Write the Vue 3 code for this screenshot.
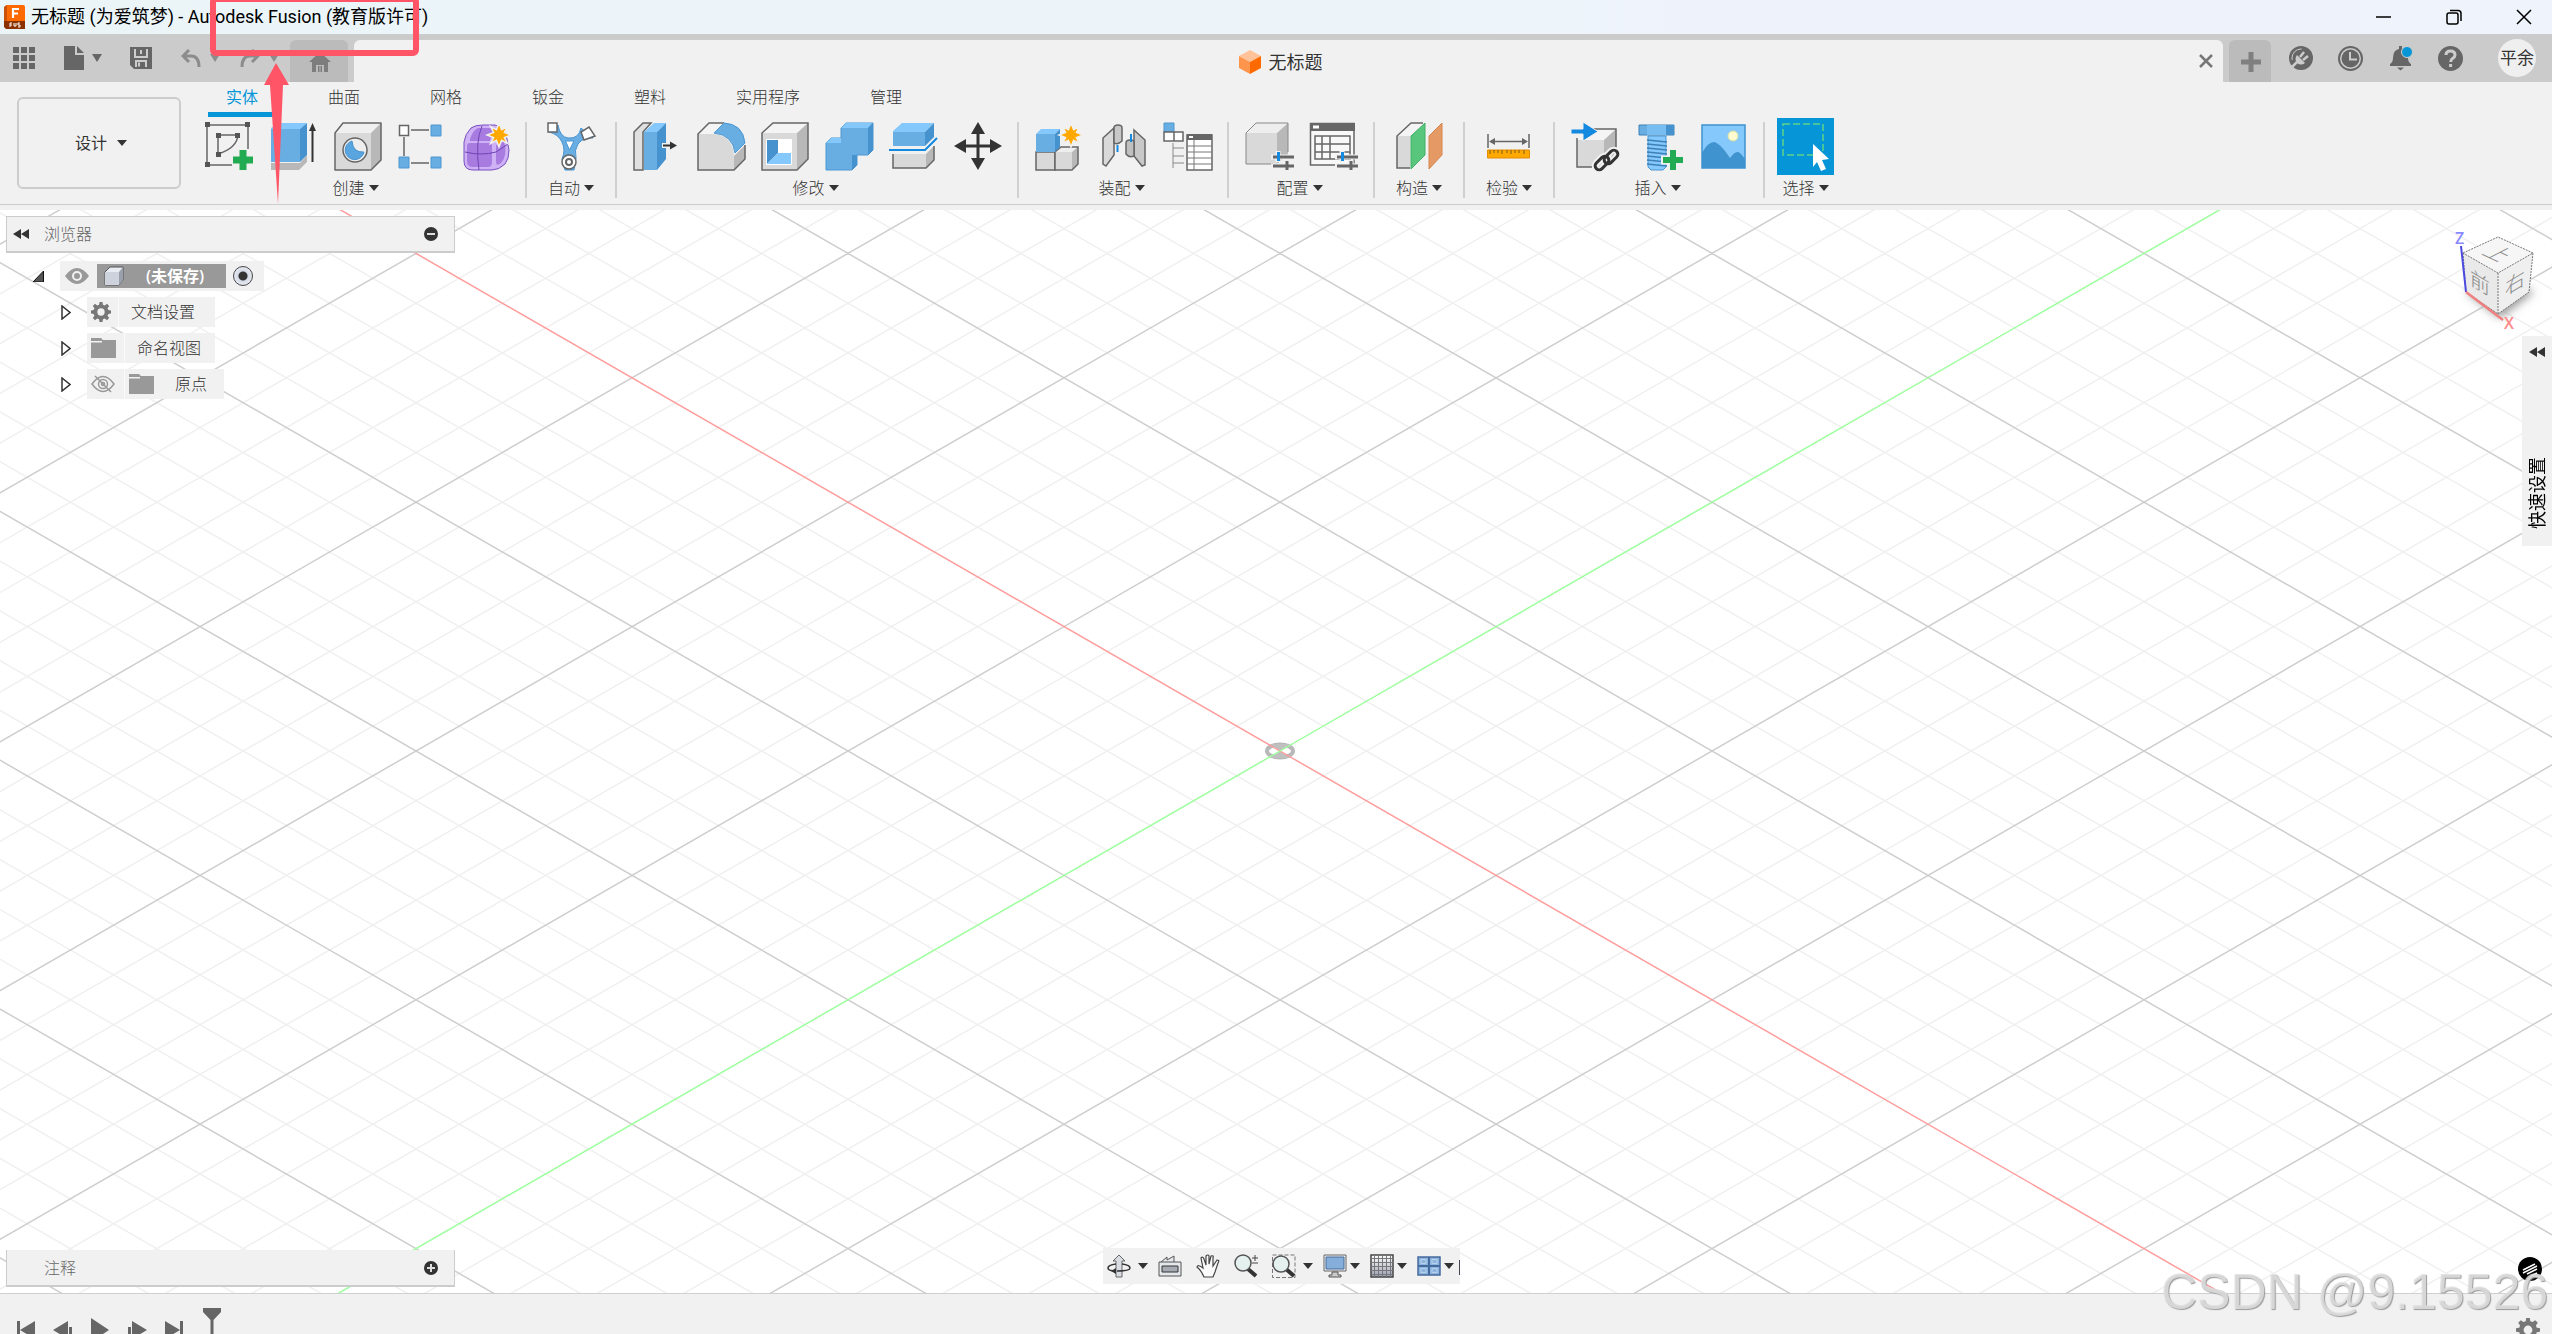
<script setup>
import { ref } from 'vue'

const tabs = ['实体', '曲面', '网格', '钣金', '塑料', '实用程序', '管理']
const activeTab = ref('实体')
const rootActive = ref('root')

// Ground grid: every fifth line is a major one. Lines follow y = ±slope · x + offset.
const slope = 124.4 / 216
const halfWidth = 1400
const step = (124.4 * 2) / 5
const line = (dir, n) => {
  const c = n * step
  const rise = dir * slope * halfWidth
  return `M${-halfWidth} ${(c - rise).toFixed(2)}L${halfWidth} ${(c + rise).toFixed(2)}`
}
const minor = []
const major = []
for (let n = -28; n <= 28; n++) {
  if (n === 0) continue
  const target = n % 5 === 0 ? major : minor
  target.push(line(1, n), line(-1, n))
}
const minorPath = minor.join('')
const majorPath = major.join('')

const star =
  'M0-12 2.6-5.4 8.5-8.5 5.4-2.6 12 0 5.4 2.6 8.5 8.5 2.6 5.4 0 12-2.6 5.4-8.5 8.5-5.4 2.6-12 0-5.4-2.6-8.5-8.5-2.6-5.4Z'
const gear =
  'M10.2 0h3.6l.5 3.2 2.2.9 2.7-1.9 2.6 2.6-1.9 2.7.9 2.2 3.2.5v3.6l-3.2.5-.9 2.2 1.9 2.7-2.6 2.6-2.7-1.9-2.2.9-.5 3.2h-3.6l-.5-3.2-2.2-.9-2.7 1.9-2.6-2.6 1.9-2.7-.9-2.2L0 13.8v-3.6l3.2-.5.9-2.2-1.9-2.7 2.6-2.6 2.7 1.9 2.2-.9ZM12 7.600a4.400 4.400 0 1 0 0 8.800a4.400 4.400 0 1 0 0-8.800Z'
</script>

<template>
  <div class="app">
    <header class="titlebar">
      <svg class="logo" viewBox="0 0 22 24" aria-hidden="true">
        <path d="M2 1 4 0H20a2 2 0 0 1 2 2V16H1V3Z" fill="#ff6a00" />
        <path d="M1 2 4 0V16H1Z" fill="#c9510a" />
        <path d="M1 16H22V24H3L1 22Z" fill="#8c3200" />
        <path d="M10 13V4h6M10 8.500h5" fill="none" stroke="#fff" stroke-width="2.200" />
        <path d="M7 22v-4h2M7 20h2M11 18v3h2v-3M17 18h-2v2h2v2h-2" fill="none" stroke="#fff" stroke-width="1" />
      </svg>
      <h1>无标题 (为爱筑梦) - Autodesk Fusion (教育版许可)</h1>
      <div class="window-buttons">
        <button aria-label="最小化"><svg viewBox="0 0 16 16" stroke-width="1.500"><path d="M0 8H15" /></svg></button>
        <button aria-label="还原">
          <svg viewBox="0 0 16 16" stroke-width="1.500"><rect x="1" y="4" width="11" height="11" rx="2" /><path d="M4 1.500h8a3 3 0 0 1 3 3V12" /></svg>
        </button>
        <button aria-label="关闭"><svg viewBox="0 0 16 16" stroke-width="1.500"><path d="M1 1 15 15M15 1 1 15" /></svg></button>
      </div>
    </header>

    <div class="tabbar">
      <div class="quick">
        <button aria-label="数据面板">
          <svg width="22" height="22" viewBox="0 0 22 22" fill="#666"><path d="M0 0h6v6H0zM8 0h6v6H8zM16 0h6v6h-6zM0 8h6v6H0zM8 8h6v6H8zM16 8h6v6h-6zM0 16h6v6H0zM8 16h6v6H8zM16 16h6v6h-6z" /></svg>
        </button>
        <button class="file" aria-label="文件">
          <svg width="20" height="24" viewBox="0 0 20 24" fill="#666"><path d="M0 0H11V9H20V24H0ZM13 0 20 7H13Z" /></svg>
          <i class="caret"></i>
        </button>
        <button class="save" aria-label="保存">
          <svg width="22" height="22" viewBox="0 0 22 22"><path d="M0 0H22V22H4L0 18Z" fill="#666" /><path d="M5 2v8h12V2M6 20v-6h10v6M11 3v4M9 15.500v4" fill="none" stroke="#ccc" stroke-width="2" /></svg>
        </button>
        <button class="undo" aria-label="撤消">
          <svg width="20" height="18" viewBox="0 0 20 18" fill="none" stroke="#8c8c8c" stroke-width="3"><path d="M8 1 2 7l6 6M2 7h8q8 0 8 11" /></svg>
          <i class="caret dim"></i>
        </button>
        <button class="undo" aria-label="恢复">
          <svg width="20" height="18" viewBox="0 0 20 18" fill="none" stroke="#8c8c8c" stroke-width="3"><path d="M12 1l6 6-6 6M18 7h-8Q2 7 2 18" /></svg>
          <i class="caret dim"></i>
        </button>
      </div>
      <button class="home" aria-label="主页">
        <svg width="22" height="20" viewBox="0 0 22 20" fill="#7d7d7d"><path d="M11 0 22 10H0ZM3 10H19V20H15V13H7V20H3ZM9 14h1.500v6H9zM11.500 14H13v6h-1.500z" /></svg>
      </button>
      <div class="doc-tab">
        <div class="doc-name">
          <svg width="22" height="24" viewBox="0 0 22 24"><path d="M11 0 22 6 11 12 0 6Z" fill="#ffc299" /><path d="M0 6 11 12V24L0 18Z" fill="#ff944d" /><path d="M22 6 11 12V24L22 18Z" fill="#ff6a00" /></svg>
          <span>无标题</span>
        </div>
        <button aria-label="关闭文档"><svg width="14" height="14" viewBox="0 0 14 14" stroke="#777" stroke-width="2.500"><path d="M1 1 13 13M13 1 1 13" /></svg></button>
      </div>
      <button class="new-tab" aria-label="新建">
        <svg width="20" height="20" viewBox="0 0 20 20" stroke="#808080" stroke-width="5"><path d="M10 0V20M0 10H20" /></svg>
      </button>
      <div class="status">
        <button aria-label="扩展">
          <svg width="24" height="24" viewBox="0 0 24 24"><circle cx="12" cy="12" r="12" fill="#666" /><circle cx="12" cy="12" r="9" fill="none" stroke="#ccc" stroke-width="1" stroke-dasharray="17 40" stroke-dashoffset="-26" /><path d="M2 22 8 16" stroke="#ccc" stroke-width="2.500" /><path d="M8 9 16 17q-4 3-8 0-3-4 0-8Z" fill="#ccc" /><path d="M11 11l4-5M14 14l5-4" fill="none" stroke="#ccc" stroke-width="2.500" /></svg>
        </button>
        <button aria-label="作业状态">
          <svg width="25" height="25" viewBox="0 0 25 25"><circle cx="12.500" cy="12.500" r="11.500" fill="none" stroke="#666" stroke-width="2" /><circle cx="12.500" cy="12.500" r="9" fill="#666" /><path d="M12 6v7.500h7" fill="none" stroke="#ccc" stroke-width="2" /></svg>
        </button>
        <button aria-label="通知">
          <svg width="25" height="25" viewBox="0 0 25 25"><path d="M11 0h3v3q6 1 6 9 0 4 3 6v2H2v-2q3-2 3-6 0-8 6-9ZM9 21.500h7l-3.500 3Z" fill="#666" /><circle cx="19" cy="6" r="5.500" fill="#0696d7" stroke="#ccc" /></svg>
        </button>
        <button aria-label="帮助">
          <svg width="25" height="25" viewBox="0 0 25 25"><circle cx="12.500" cy="12.500" r="12.500" fill="#666" /><path d="M8 9q0-4 4.500-4t4.500 4q0 2-2.500 3.500-1.800 1.200-1.800 3.500M12.600 18v3" fill="none" stroke="#ccc" stroke-width="3" /></svg>
        </button>
        <button class="avatar">平余</button>
      </div>
    </div>

    <div class="ribbon">
      <button class="workspace">设计 <i class="caret small"></i></button>
      <div class="ribbon-main">
        <nav class="ribbon-tabs">
          <button v-for="t in tabs" :key="t" :class="{ active: t === activeTab }" @click="activeTab = t">{{ t }}</button>
        </nav>
        <div class="groups">
          <section class="group">
            <div class="tools">
              <button aria-label="创建草图">
                <svg viewBox="0 0 48 48"><path d="M43 27V3H2V43H27M13 32V13H33Q32 26 13 32" fill="none" stroke="#666" stroke-width="1.500" /><path d="M0 0h5v5H0zM40 0h5v5h-5zM0 40h5v5H0zM11 11h5v5h-5zM30 11h5v5h-5zM11 30h5v5h-5z" fill="#555" /><path d="M38 27V49M27 38H49" stroke="#f0f0f0" stroke-width="10" /><path d="M38 28V48M28 38H48" stroke="#22ab52" stroke-width="7" /></svg>
              </button>
              <button aria-label="拉伸">
                <svg viewBox="0 0 48 48"><path d="M2 41H31L38 33V40L30 48H2Z" fill="#b8b8b8" /><path d="M2 6 10 1H38L31 7H2Z" fill="#85c8fb" /><path d="M2 7H31V40H2Z" fill="#68aee3" /><path d="M31 7 38 1V33L31 40Z" fill="#4692cf" /><path d="M43.500 8V40" stroke="#333" stroke-width="2" /><path d="M43.500 1 47 9H40Z" fill="#333" /></svg>
              </button>
              <button aria-label="孔">
                <svg viewBox="0 0 48 48" stroke-linejoin="round"><path d="M2 11 10 1H48V38L38 48H2Z" fill="#f0f0f0" /><path d="M2 11H38V48H2Z" fill="#d9d9d9" /><path d="M38 11 48 1V38L38 48Z" fill="#b8b8b8" /><path d="M2 11 10 1H48V38L38 48H2Z" fill="none" stroke="#666" stroke-width="1.500" /><circle cx="22" cy="28" r="12" fill="#eee" stroke="#666" stroke-width="1.500" /><path d="M19 19A9.500 9.500 0 1 0 31 30Q20 31 19 19Z" fill="#58a5e0" stroke="#4692cf" /></svg>
              </button>
              <button aria-label="阵列">
                <svg viewBox="0 0 48 48"><path d="M14 8H32M7 15V34M14 41H32" stroke="#666" stroke-width="1.500" /><path d="M2.500 3.500h9v10h-9z" fill="#fff" stroke="#666" stroke-width="1.500" /><path d="M34 3h10v11H34zM2 35h10v11H2zM34 35h10v11H34z" fill="#68aee3" stroke="#4d97d2" /></svg>
              </button>
              <button aria-label="创建形状">
                <svg viewBox="0 0 48 48"><path d="M3 20Q4 12 10 6 14 3 22 3H34Q44 6 46 17L48 28Q48 37 44 42 38 48 31 48H12Q3 48 3 39Z" fill="#ceb2f5" stroke="#7a4fc0" /><path d="M9 17Q12 8 17 6H33Q30 12 29 19H9ZM6 24Q6 21 9 21H28Q31 21 31 24V40Q31 45 27 45H12Q6 45 6 39ZM35 23 43 19Q47 33 40 41 35 45 35 40Z" fill="#a77be0" /><path d="M4 30Q20 34 35 30L47 22M21 4Q14 20 18 48" stroke="#7044b5" fill="none" /><path :d="star" transform="translate(38 13)" fill="#ffa800" stroke="#f0f0f0" stroke-width="1.500" /></svg>
              </button>
            </div>
            <button class="group-label">创建<i class="caret small"></i></button>
          </section>
          <section class="group single">
            <div class="tools">
              <button aria-label="自动建模">
                <svg viewBox="0 0 48 48"><path d="M2 10 11 3Q13 15 21 16 32 17 34 6L46 16Q36 15 31 22 27 28 29 36L27 48H18L15 37Q19 28 15 20 11 12 2 10Z" fill="#68aee3" stroke="#4692cf" /><path d="M18.500 19H27L22.500 28Z" fill="#fff" stroke="#4692cf" /><path d="M1 1H10V10H1Z" fill="#fff" stroke="#666" stroke-width="1.500" /><path d="M42 5 48 14 37 18 34 10Z" fill="#fff" stroke="#666" stroke-width="1.500" /><circle cx="22" cy="40" r="7" fill="#fff" stroke="#666" stroke-width="1.500" /><circle cx="22" cy="40" r="3" fill="none" stroke="#666" stroke-width="2" /></svg>
              </button>
            </div>
            <button class="group-label">自动<i class="caret small"></i></button>
          </section>
          <section class="group">
            <div class="tools">
              <button aria-label="按拉">
                <svg viewBox="0 0 48 48"><path d="M10 48H1V10L10 1H18L10 10Z" fill="#e0e0e0" stroke="#666" stroke-width="1.500" /><path d="M11 10 21 1H33L24 10Z" fill="#85c8fb" /><path d="M11 10H24V48H11Z" fill="#68aee3" /><path d="M24 10 33 1V37L24 48Z" fill="#4692cf" /><path d="M29 23.500H46" stroke="#f0f0f0" stroke-width="5" /><path d="M30 23.500H38" stroke="#333" stroke-width="2" /><path d="M37 19.500 44 23.500 37 27.500Z" fill="#333" /></svg>
              </button>
              <button aria-label="圆角">
                <svg viewBox="0 0 48 48"><path d="M1 12 12 1H27L17 12Z" fill="#f4f4f4" /><path d="M1 12H17Q36 14 37 34V48H1Z" fill="#d9d9d9" /><path d="M37 34 48 23V37L37 48Z" fill="#b8b8b8" /><path d="M27 1H12L1 12V48H37L48 37V23" fill="none" stroke="#666" stroke-width="1.500" /><path d="M17 11 27 1Q46 2 48 21L38 31Q36 13 17 11Z" fill="#68aee3" stroke="#4d97d2" /></svg>
              </button>
              <button aria-label="抽壳">
                <svg viewBox="0 0 48 48"><path d="M1 11 12 1H47V37L36 48H1Z" fill="#f4f4f4" /><path d="M1 11H36V48H1Z" fill="#d9d9d9" /><path d="M36 11 47 1V37L36 48Z" fill="#b8b8b8" /><path d="M1 11 12 1H47V37L36 48H1Z" fill="none" stroke="#666" stroke-width="1.500" /><path d="M5 17H31V43H5Z" fill="#fff" /><path d="M6 18H17V31L6 42Z" fill="#4692cf" /><path d="M6 42 17 31H30V42Z" fill="#85c8fb" /></svg>
              </button>
              <button aria-label="合并">
                <svg viewBox="0 0 48 48"><path d="M1 21 6 16H16V6L21 1H48V28L43 33H32V43L27 48H1Z" fill="#68aee3" stroke="#4d97d2" /><path d="M16 6 21 1H47L43 6ZM1 21 6 16H16V21Z" fill="#85c8fb" /><path d="M43 6 48 1V28L43 33ZM27 33H32V43L27 48Z" fill="#4692cf" /></svg>
              </button>
              <button aria-label="分割实体">
                <svg viewBox="0 0 48 48"><path d="M4 9 13 1H45L36 10H4Z" fill="#85c8fb" /><path d="M4 10H36V24H4Z" fill="#68aee3" /><path d="M36 10 45 1V15L36 24Z" fill="#4692cf" /><path d="M0 28H36L48 16" fill="none" stroke="#1389e0" stroke-width="2" /><path d="M4 32H37V46H4Z" fill="#d9d9d9" /><path d="M37 32 45 24V38L37 46Z" fill="#b8b8b8" /><path d="M4 32V46H37L45 38V24" fill="none" stroke="#666" stroke-width="1.500" /></svg>
              </button>
              <button aria-label="移动/复制">
                <svg viewBox="0 0 48 48"><path d="M25 8V40M9 24H41" stroke="#333" stroke-width="3" /><path d="M25 0 32 12H18ZM25 48 32 36H18ZM1 24 13 17V31ZM49 24 37 17V31Z" fill="#333" /></svg>
              </button>
            </div>
            <button class="group-label">修改<i class="caret small"></i></button>
          </section>
          <section class="group">
            <div class="tools">
              <button aria-label="新建零部件">
                <svg viewBox="0 0 48 48"><path d="M1 30H20V48H1Z" fill="#d9d9d9" stroke="#666" stroke-width="1.500" /><path d="M20 30 26 25H43L37 30Z" fill="#eee" /><path d="M20 30H37V48H20Z" fill="#d9d9d9" /><path d="M37 30 43 25V42L37 48Z" fill="#b8b8b8" /><path d="M20 48V30L26 25H43V42L37 48Z" fill="none" stroke="#666" stroke-width="1.500" /><path d="M1 12 6 7H25L20 12Z" fill="#85c8fb" /><path d="M1 12H20V30H1Z" fill="#68aee3" /><path d="M20 12 25 7V25L20 30Z" fill="#4692cf" /><path :d="star" transform="translate(36 13)" fill="#ffa800" stroke="#f0f0f0" stroke-width="1.500" /></svg>
              </button>
              <button aria-label="联接">
                <svg viewBox="0 0 48 48" stroke="#666" stroke-width="1.500"><path d="M4 16 15 6V33L7 44 4 42Z" fill="#d9d9d9" /><path d="M15 6Q15 3 19 3T23 6V19Q19 23 15 21Z" fill="#c8c8c8" /><path d="M35 8 46 18V43L43 44 35 34Z" fill="#c8c8c8" /><path d="M27 21Q27 18 31 18T35 20V34Q30 36 27 32Z" fill="#c0c0c0" /><path d="M18.500 23V30M32 12V20" stroke="#1389e0" stroke-width="2" /></svg>
              </button>
              <button aria-label="明细表">
                <svg viewBox="0 0 48 48"><path d="M1 1H11V10H1Z" fill="#68aee3" stroke="#4d97d2" /><path d="M1 10H11V19H1ZM11 10H20V19H11Z" fill="#fff" stroke="#666" stroke-width="1.500" /><path d="M10 21V46M10 26H21M10 34H21M10 41H21" stroke="#888" stroke-width="1" /><path d="M24 13H49V48H24Z" fill="#fff" stroke="#666" stroke-width="1.500" /><path d="M24 12H49V18H24Z" fill="#666" /><path d="M31 18V48M24 24H49M24 30H49M24 36H49M24 42H49" stroke="#777" /><path d="M26 14h4v2h-4z" fill="#fff" /></svg>
              </button>
            </div>
            <button class="group-label">装配<i class="caret small"></i></button>
          </section>
          <section class="group">
            <div class="tools">
              <button aria-label="配置设计">
                <svg viewBox="0 0 48 48"><path d="M1 11 11 1H43L32 11Z" fill="#eee" /><path d="M1 11H32V42H1Z" fill="#d9d9d9" /><path d="M32 11 43 1V32L32 42Z" fill="#b8b8b8" /><path d="M28 42H1V11L11 1H43V30" fill="none" stroke="#888" /><path d="M26 35H48M26 44H48M33 29V40M42 38V49" stroke="#f0f0f0" stroke-width="5" /><path d="M28 35H49M28 44H49M42 39V48" stroke="#666" stroke-width="3" /><path d="M33.500 30V39" stroke="#1389e0" stroke-width="3" /></svg>
              </button>
              <button aria-label="配置表">
                <svg viewBox="0 0 48 48"><path d="M1.500 1.500H45V43H1.500Z" fill="#f8f8f8" stroke="#666" stroke-width="1.500" /><path d="M1 1H46V9H1Z" fill="#666" /><path d="M4 3.500h6v3H4z" fill="#fff" /><path d="M6 14H41V37H6ZM6 22H41M6 30H41M13 14V37M21 14V37" fill="none" stroke="#666" stroke-width="1.500" /><path d="M26 35H48M26 44H48M33 29V40M42 38V49" stroke="#f0f0f0" stroke-width="5" /><path d="M28 35H49M28 44H49M42 39V48" stroke="#666" stroke-width="3" /><path d="M33.500 30V39" stroke="#1389e0" stroke-width="3" /></svg>
              </button>
            </div>
            <button class="group-label">配置<i class="caret small"></i></button>
          </section>
          <section class="group single">
            <div class="tools">
              <button aria-label="偏移平面">
                <svg viewBox="0 0 48 48"><path d="M2 14 16 1H29L15 14Z" fill="#f4f4f4" /><path d="M2 14H15V46H2Z" fill="#d9d9d9" /><path d="M15 46H2V14L16 1H28" fill="none" stroke="#666" stroke-width="1.500" /><path d="M16 14 30 1V33L16 47Z" fill="#59c67d" stroke="#41b068" /><path d="M34 14 47 1V33L34 47Z" fill="#e59a66" stroke="#d6874f" /></svg>
              </button>
            </div>
            <button class="group-label">构造<i class="caret small"></i></button>
          </section>
          <section class="group single">
            <div class="tools">
              <button aria-label="测量">
                <svg viewBox="0 0 48 48"><path d="M3 12V26M44 12V26M6 19.500H41" stroke="#666" stroke-width="1.500" /><path d="M4 19.500 10 16V23ZM43 19.500 37 16V23Z" fill="#666" /><path d="M2.500 28H44.500V36H2.500Z" fill="#ffa800" stroke="#e08d00" /><path d="M5 28v4M9 28v3M13 28v3M17 28v4M22 28v3M26 28v4M30 28v3M34 28v3M39 28v4" stroke="#7a5a20" /></svg>
              </button>
            </div>
            <button class="group-label">检验<i class="caret small"></i></button>
          </section>
          <section class="group">
            <div class="tools">
              <button aria-label="插入衍生">
                <svg viewBox="0 0 48 48"><path d="M6 18 17 7H45L33 18Z" fill="#f4f4f4" /><path d="M6 18H33V45H6Z" fill="#d9d9d9" /><path d="M33 18 45 7V34L33 45Z" fill="#b8b8b8" /><path d="M6 16V45H30M20 7H45V30" fill="none" stroke="#666" stroke-width="1.500" /><path d="M0 7H12V0L27 9.500 12 19V12H0Z" fill="#1389e0" stroke="#f0f0f0" /><g fill="none" stroke="#f0f0f0" stroke-width="7"><rect x="-8" y="-4" width="16" height="8" rx="4" transform="translate(31 41) rotate(-45)" /><rect x="-8" y="-4" width="16" height="8" rx="4" transform="translate(40 35) rotate(-45)" /></g><g fill="none" stroke="#333" stroke-width="3"><rect x="-8" y="-4" width="16" height="8" rx="4" transform="translate(31 41) rotate(-45)" /><rect x="-8" y="-4" width="16" height="8" rx="4" transform="translate(40 35) rotate(-45)" /></g></svg>
              </button>
              <button aria-label="插入紧固件">
                <svg viewBox="0 0 48 48"><path d="M13 14H31V45L28 48H16L13 45Z" fill="#85c8fb" stroke="#4d97d2" /><path d="M4 3H39V13H4Z" fill="#68aee3" stroke="#3c81b8" /><path d="M12 3H31V13H12Z" fill="#78bdf2" /><path d="M31 3H39V13H31Z" fill="#4692cf" /><path d="M12 18 32 20M12 22 32 24M12 26 32 28M12 30 32 32M12 34 32 36M12 38 32 40M12 42 32 44" stroke="#3c81b8" stroke-width="1.500" /><path d="M38 26V49M26 38H49" stroke="#f0f0f0" stroke-width="9" /><path d="M38 28V48M28 38H48" stroke="#22ab52" stroke-width="6" /></svg>
              </button>
              <button aria-label="画布">
                <svg viewBox="0 0 48 48"><path d="M3 3H46V46H3Z" fill="#85c8fb" /><path d="M3 31Q9 20 15 20 21 21 31 36 36 29 39 30 41 30 46 37V46H3Z" fill="#3f93cf" /><path d="M3 3H46V46H3Z" fill="none" stroke="#3f93cf" stroke-width="1.500" /><circle cx="34" cy="14" r="5" fill="#fffbd0" stroke="#d5e2a0" /></svg>
              </button>
            </div>
            <button class="group-label">插入<i class="caret small"></i></button>
          </section>
          <section class="group select-group">
            <div class="tools">
              <button aria-label="选择">
                <svg viewBox="0 0 57 57"><path d="M0 0H57V57H0Z" fill="#0696d7" /><path d="M6 6H46V37H6Z" fill="none" stroke="#5fd38a" stroke-width="1.500" stroke-dasharray="7 3" /><path d="M36 26 52 41 45 42 49 51 44 53 40 44 36 49Z" fill="#fff" /></svg>
              </button>
            </div>
            <button class="group-label">选择<i class="caret small"></i></button>
          </section>
        </div>
      </div>
    </div>

    <main class="viewport">
      <svg class="grid" viewBox="-1280 -541 2552 1083" preserveAspectRatio="xMidYMid slice" aria-hidden="true">
        <path :d="minorPath" stroke="#f0f0f0" stroke-width="1.500" />
        <path :d="majorPath" stroke="#cecece" stroke-width="1.500" />
        <ellipse rx="13" ry="6.500" fill="none" stroke="#b8b8b8" stroke-width="4" />
        <path d="M-10-7H10L0 0 10 7H-10L0 0Z" fill="#c0c0c0" />
        <path :d="line(1, 0)" stroke="#ff9d9d" stroke-width="1.500" />
        <path :d="line(-1, 0)" stroke="#9dff9d" stroke-width="1.500" />
      </svg>

      <aside class="browser">
        <div class="panel">
          <button aria-label="折叠"><svg width="16" height="10" viewBox="0 0 16 10" fill="#333"><path d="M0 5 8 0V10ZM8 5 16 0V10Z" /></svg></button>
          <h2>浏览器</h2>
          <button aria-label="收起"><svg width="14" height="14" viewBox="0 0 14 14"><circle cx="7" cy="7" r="7" fill="#333" /><path d="M3 7H11" stroke="#ddd" stroke-width="2" /></svg></button>
        </div>
        <ul class="tree">
          <li class="root">
            <svg class="twist" width="11" height="11" viewBox="0 0 11 11"><path d="M0 11 10.500 0V11Z" fill="#555" stroke="#111" /></svg>
            <div class="node">
              <svg class="vis" width="24" height="16" viewBox="0 0 24 16"><path d="M0 8Q12-8 24 8 12 24 0 8Z" fill="#999" /><circle cx="12" cy="8" r="4" fill="#999" stroke="#f1f1f1" stroke-width="2" /></svg>
              <div class="chip">
                <svg width="20" height="20" viewBox="0 0 20 20"><path d="M1 6 6 1H19V14L15 19H1Z" fill="#e8ebf1" stroke="#555" /><path d="M15 6 19 1V14L15 19Z" fill="#9aa0ac" /><path d="M1 6H15V19H1Z" fill="#cdd2dc" /></svg>
                <b>(未保存)</b>
              </div>
              <input v-model="rootActive" type="radio" value="root" aria-label="激活零部件" />
            </div>
          </li>
          <li>
            <svg class="twist" width="10" height="15" viewBox="0 0 10 15"><path d="M1 1 9 7.500 1 14Z" fill="#fff" stroke="#333" stroke-width="1.500" /></svg>
            <div class="node">
              <span class="cell narrow"><svg width="20" height="20" viewBox="0 0 24 24"><path :d="gear" fill="#777" fill-rule="evenodd" /></svg></span>
              <span class="name">文档设置</span>
            </div>
          </li>
          <li>
            <svg class="twist" width="10" height="15" viewBox="0 0 10 15"><path d="M1 1 9 7.500 1 14Z" fill="#fff" stroke="#333" stroke-width="1.500" /></svg>
            <div class="node">
              <span class="cell"><svg width="25" height="20" viewBox="0 0 25 20" fill="#999"><path d="M0 0H10L12 2H25V20H0V4.500H11V3H0Z" /></svg></span>
              <span class="name">命名视图</span>
            </div>
          </li>
          <li>
            <svg class="twist" width="10" height="15" viewBox="0 0 10 15"><path d="M1 1 9 7.500 1 14Z" fill="#fff" stroke="#333" stroke-width="1.500" /></svg>
            <div class="node">
              <span class="cell"><svg width="24" height="18" viewBox="0 0 24 18" fill="none" stroke="#999" stroke-width="1.500"><path d="M1 9Q12-6 23 9 12 24 1 9ZM4 1 20 17" /><circle cx="12" cy="9" r="4.500" /><circle cx="12" cy="9" r="1.500" /></svg></span>
              <svg class="folder" width="25" height="20" viewBox="0 0 25 20" fill="#999"><path d="M0 0H10L12 2H25V20H0V4.500H11V3H0Z" /></svg>
              <span class="name last">原点</span>
            </div>
          </li>
        </ul>
      </aside>

      <div class="comments panel">
        <h2>注释</h2>
        <button aria-label="展开"><svg width="14" height="14" viewBox="0 0 14 14"><circle cx="7" cy="7" r="7" fill="#333" /><path d="M3 7H11M7 3V11" stroke="#ddd" stroke-width="2" /></svg></button>
      </div>

      <svg class="cube" width="72" height="108" viewBox="2450 225 72 108" role="img" aria-label="视图立方体">
        <defs>
          <filter id="soft" x="-50%" y="-50%" width="200%" height="200%"><feGaussianBlur stdDeviation="5" /></filter>
        </defs>
        <g transform="translate(-7 0)">
          <path d="M2466 292 2498 276 2534 292 2500 318Z" fill="#999" filter="url(#soft)" />
          <path d="M2498 237 2533 253 2498 273 2463 253Z" fill="#f6f6f6" />
          <path d="M2463 253 2498 273V314L2466 292Z" fill="#e9e9e9" />
          <path d="M2533 253 2498 273V314L2529 292Z" fill="#efefef" />
          <g class="face">
            <text x="-10" y="7" transform="translate(2498 254) rotate(25) skewX(-38)">上</text>
            <text x="-10" y="7" transform="translate(2480 283) skewY(31)">前</text>
            <text x="-10" y="7" transform="translate(2515 283) skewY(-31)">右</text>
          </g>
          <path d="M2463 253 2498 237 2533 253 2498 273ZL2466 292 2498 314 2529 292 2533 253M2498 273V314" fill="none" stroke="#777" stroke-dasharray="2 1" />
          <path d="M2461 246 2466 292" stroke="#4a4ae0" stroke-width="2" />
          <path d="M2466 292 2503 320" stroke="#f08080" stroke-width="2.500" />
          <text class="axis" x="2455" y="244" fill="#8888ff">Z</text>
          <text class="axis" x="2504" y="329" fill="#ff8888">X</text>
        </g>
      </svg>

      <div class="quick-setup">
        <button aria-label="展开"><svg width="16" height="10" viewBox="0 0 16 10" fill="#333"><path d="M0 5 8 0V10ZM8 5 16 0V10Z" /></svg></button>
        <span>快速设置</span>
      </div>

      <div class="navbar">
        <button aria-label="动态观察"><svg width="24" height="24" viewBox="0 0 24 24"><path d="M9 23V7H6L12 1 18 7H15V23Z" fill="#d9dde3" stroke="#666" /><path d="M9 10Q1 11 1 14T9 17M15 10Q23 11 23 14T10 17" fill="none" stroke="#333" stroke-width="1.500" /><path d="M4 17 9 14V20Z" fill="#333" /></svg><i class="caret small"></i></button>
        <button aria-label="观察方向"><svg width="24" height="24" viewBox="0 0 24 24" fill="#e4e7eb" stroke="#555"><path d="M3 8 9 3V6L16 2V8M1 8H23V22H1Z" /><path d="M4 12H20V18H4Z" fill="#a6abb3" stroke="#333" /></svg></button>
        <button aria-label="平移"><svg width="24" height="24" viewBox="0 0 24 24"><path d="M8 23Q5 16 1 13 2 10 7 14L5 4Q7 2 8 5L10 11V2Q12 0 13 2V10L15 2Q18 1 17 4V12L21 6Q24 6 22 9L19 18 17 23Z" fill="#fafafa" stroke="#444" stroke-width="1.200" /></svg></button>
        <button aria-label="缩放"><svg width="24" height="24" viewBox="0 0 24 24"><path d="M14 15 22 22" stroke="#333" stroke-width="4" /><circle cx="9" cy="9" r="8" fill="#e4f1ef" stroke="#555" stroke-width="1.500" /><path d="M18 4H24M21 1V7M18 9H24" stroke="#444" /></svg></button>
        <button aria-label="窗口缩放"><svg width="24" height="24" viewBox="0 0 24 24"><path d="M.5 1H23V23.500H.5Z" fill="none" stroke="#777" stroke-dasharray="4 2" /><path d="M14 15 22 22" stroke="#333" stroke-width="4" /><circle cx="9" cy="10" r="8" fill="#e4f1ef" stroke="#555" stroke-width="1.500" /></svg><i class="caret small"></i></button>
        <button class="tight" aria-label="显示设置"><svg width="24" height="24" viewBox="0 0 24 24"><path d="M1 1H23V17H1Z" fill="#eee" stroke="#666" /><path d="M3 3H21V15H3Z" fill="#86aedb" stroke="#456a9c" /><path d="M9 18H15V21H18V23H6V21H9Z" fill="#ccc" stroke="#555" /></svg><i class="caret small"></i></button>
        <button class="tight" aria-label="栅格和捕捉"><svg width="24" height="24" viewBox="0 0 24 24"><defs><linearGradient id="shade" x2="0" y2="1"><stop offset="0" stop-color="#fff" /><stop offset="1" stop-color="#9aa0b4" /></linearGradient></defs><path d="M1 1H23V23H1Z" fill="url(#shade)" stroke="#444" stroke-width="1.500" /><path d="M4.500 1V23M8.500 1V23M12.500 1V23M16.500 1V23M20.500 1V23M1 4.500H23M1 8.500H23M1 12.500H23M1 16.500H23M1 20.500H23" stroke="#777" /></svg><i class="caret small"></i></button>
        <button class="tight" aria-label="视口"><svg width="24" height="24" viewBox="0 0 24 24"><path d="M1 3H23V21H1Z" fill="#8db4de" stroke="#456a9c" stroke-width="1.500" /><path d="M12 3V21M1 12H23" stroke="#456a9c" stroke-width="2" /><path d="M4 5.500H9V9.500H4ZM15 5.500H20V9.500H15ZM4 14.500H9V18.500H4ZM15 14.500H20V18.500H15Z" fill="none" stroke="#b8d2ee" /></svg><i class="caret small"></i></button>
      </div>

      <svg class="assistant" width="24" height="24" viewBox="0 0 24 24" aria-hidden="true"><circle cx="12" cy="12" r="12" fill="#000" /><path d="M5 13 17 7M5 16 19 9M9 17 19 12M13 19 19 16" stroke="#fff" stroke-width="1.500" /></svg>
    </main>

    <footer class="timeline">
      <button aria-label="开头"><svg width="18" height="18" viewBox="0 0 18 18"><path d="M0 0H3V18H0ZM3 9 18 0V18Z" /></svg></button>
      <button aria-label="上一步"><svg width="20" height="18" viewBox="0 0 20 18"><path d="M0 9 15 0V18ZM16 6H19V18H16Z" /></svg></button>
      <button aria-label="播放"><svg width="18" height="24" viewBox="0 0 18 24"><path d="M0 0 18 12 0 24Z" /></svg></button>
      <button aria-label="下一步"><svg width="20" height="18" viewBox="0 0 20 18"><path d="M20 9 5 0V18ZM1 6H4V18H1Z" /></svg></button>
      <button aria-label="结尾"><svg width="18" height="18" viewBox="0 0 18 18"><path d="M15 0H18V18H15ZM0 0 15 9 0 18Z" /></svg></button>
      <svg class="marker" width="18" height="44" viewBox="0 0 18 44"><path d="M0 0H18V4L10.500 12V44H7.500V12L0 4Z" /></svg>
      <button class="settings" aria-label="设置"><svg width="24" height="24" viewBox="0 0 24 24"><path :d="gear" fill="#777" fill-rule="evenodd" /></svg></button>
    </footer>

    <svg class="callout" width="212" height="206" viewBox="208 0 212 206" aria-hidden="true">
      <rect x="213" y="-1" width="203" height="54" rx="3" fill="none" stroke="#ff5566" stroke-width="6" />
      <path d="M276 63 289 85H283L278 204 270 85H264Z" fill="#ff5566" />
    </svg>
    <div class="watermark">CSDN @9.15526</div>
  </div>
</template>

<style>
body {
  margin: 0;
  overflow: hidden;
}
</style>

<style scoped>
.app {
  position: relative;
  display: flex;
  flex-direction: column;
  height: 100vh;
  overflow: hidden;
  background: #f1f1f1;
  color: #333;
  font: 16px/22px "Open Sans", "Noto Sans CJK SC", sans-serif;
}
button {
  display: flex;
  align-items: center;
  justify-content: center;
  padding: 0;
  border: 0;
  background: none;
  color: inherit;
  font: inherit;
}
svg {
  display: block;
  flex: none;
}
h1,
h2 {
  margin: 0;
  font-size: 16px;
  font-weight: 400;
}
.caret {
  border: 5px solid transparent;
  border-top: 8px solid #666;
  border-bottom: 0;
}
.caret.dim {
  border-top-color: #8c8c8c;
}
.caret.small {
  border-top: 6px solid #333;
}

/* title bar */
.titlebar {
  display: flex;
  align-items: center;
  flex: none;
  height: 34px;
  padding-left: 3px;
  background: linear-gradient(90deg, #ebf5f8, #eff3fb);
}
.logo {
  width: 22px;
  height: 24px;
}
.titlebar h1 {
  flex: 1;
  margin-left: 6px;
  color: #000;
  font-family: Roboto, "Noto Sans CJK SC", sans-serif;
  font-size: 18px;
}
.window-buttons {
  display: flex;
  gap: 54px;
  padding-right: 20px;
}
.window-buttons svg {
  width: 16px;
  height: 16px;
  fill: none;
  stroke: #000;
}

/* document tabs */
.tabbar {
  display: flex;
  flex: none;
  align-items: flex-end;
  height: 48px;
  background: #cbcbcb;
}
.quick {
  display: flex;
  align-items: center;
  box-sizing: border-box;
  width: 290px;
  height: 48px;
  padding-left: 13px;
}
.quick .file {
  gap: 8px;
  margin-left: 29px;
}
.quick .save {
  margin-left: 28px;
}
.quick .undo {
  gap: 9px;
  margin-left: 29px;
}
.quick .undo + .undo {
  margin-left: 20px;
}
.home,
.new-tab {
  box-sizing: border-box;
  width: 58px;
  height: 42px;
  padding: 2px 0 0 2px;
  border-radius: 6px 6px 0 0;
  background: #bbb;
}
.new-tab {
  width: 42px;
  margin-left: 6px;
}
.doc-tab {
  display: flex;
  flex: 1;
  align-items: center;
  height: 42px;
  margin-left: 6px;
  padding-right: 10px;
  border-radius: 6px 6px 0 0;
  background: #f1f1f1;
}
.doc-name {
  display: flex;
  flex: 1;
  align-items: center;
  justify-content: center;
  gap: 8px;
  padding: 2px 0 0 8px;
  font-size: 18px;
}
.status {
  display: flex;
  align-items: center;
  gap: 25px;
  height: 48px;
  padding: 0 16px 0 18px;
}
.avatar {
  width: 38px;
  height: 38px;
  margin-left: 10px;
  border-radius: 50%;
  background: #efefef;
  font-size: 17px;
}

/* ribbon */
.ribbon {
  display: flex;
  flex: none;
  box-sizing: border-box;
  height: 123px;
  margin-bottom: 5px;
  border-bottom: 1px solid #ccc;
  font-weight: 300;
}
.workspace {
  gap: 10px;
  box-sizing: border-box;
  width: 164px;
  height: 92px;
  margin: 15px 8px 0 17px;
  padding-left: 4px;
  border: 2px solid #ccc;
  border-radius: 6px;
  font-weight: 400;
}
.ribbon-tabs {
  display: flex;
  padding-left: 2px;
}
.ribbon-tabs button {
  position: relative;
  height: 35px;
  padding: 0 35px 5px;
}
.ribbon-tabs .active {
  color: #0696d7;
  font-weight: 400;
}
.ribbon-tabs .active::after {
  content: "";
  position: absolute;
  right: 17px;
  bottom: 0;
  left: 17px;
  height: 5px;
  background: #0696d7;
}
.groups {
  display: flex;
  padding-top: 5px;
}
.group {
  height: 76px;
  padding: 0 16px;
  border-right: 2px solid #d0d0d0;
}
.group.single {
  padding: 0 20px;
}
.tools {
  display: flex;
  gap: 16px;
}
.tools svg {
  width: 48px;
  height: 48px;
  overflow: visible;
}
.select-group {
  padding: 0 12px;
  border: 0;
}
.select-group svg {
  width: 57px;
  height: 57px;
  margin: -4px 0 -5px;
}
.group-label {
  gap: 4px;
  width: 100%;
  margin-top: 7px;
  padding-right: 3px;
}
.single .group-label,
.select-group .group-label {
  padding-right: 0;
}

/* modelling area */
.viewport {
  position: relative;
  flex: 1;
  min-height: 0;
  background: #fff;
}
.grid {
  position: absolute;
  width: 100%;
  height: 100%;
}
.browser {
  position: absolute;
  top: 6px;
  left: 6px;
  font-weight: 300;
}
.panel {
  display: flex;
  align-items: center;
  box-sizing: border-box;
  width: 449px;
  height: 37px;
  padding: 0 16px 0 6px;
  border: 1px solid #ccc;
  border-bottom-width: 2px;
  background: #f1f1f1;
  color: #666;
}
.panel h2 {
  flex: 1;
  margin-left: 15px;
  font-weight: 300;
}
.comments {
  position: absolute;
  bottom: 6px;
  left: 6px;
  border-top: 0;
}
.comments h2 {
  margin-left: 31px;
}
.tree {
  display: flex;
  flex-direction: column;
  gap: 6px;
  margin: 8px 0 0;
  padding: 0;
  list-style: none;
}
.tree li {
  display: flex;
  align-items: center;
  height: 30px;
  padding-left: 55px;
}
.tree .root {
  padding-left: 27px;
}
.node {
  display: flex;
  align-items: center;
  height: 30px;
  margin-left: 16px;
  background: #f1f1f1;
}
.vis {
  margin: 0 8px 0 5px;
}
.chip {
  display: flex;
  align-items: center;
  gap: 22px;
  box-sizing: border-box;
  width: 129px;
  height: 24px;
  padding-left: 7px;
  background: #999;
  color: #fff;
}
.chip b {
  font-weight: 600;
}
.root input {
  appearance: none;
  width: 20px;
  height: 20px;
  margin: 0 11px 0 7px;
  border: 1px solid #444;
  border-radius: 50%;
  background: radial-gradient(circle, #333 0 4px, #d5dae6 5px, #f4f6fa);
}
.cell {
  display: flex;
  align-items: center;
  box-sizing: border-box;
  width: 38px;
  height: 30px;
  padding-left: 4px;
  border-right: 1px solid #fafafa;
}
.cell.narrow {
  width: 32px;
}
.name {
  padding: 0 14px 0 12px;
}
.cell.narrow + .name {
  padding-right: 20px;
}
.name.last {
  padding: 0 17px 0 21px;
}
.folder {
  margin-left: 4px;
}
.cube {
  position: absolute;
  top: 15px;
  right: 23px;
  overflow: visible;
}
.face {
  fill: #888;
  font-size: 20px;
  font-weight: 300;
}
.axis {
  font-size: 16px;
  font-weight: 600;
}
.quick-setup {
  position: absolute;
  top: 126px;
  right: 0;
  display: flex;
  flex-direction: column;
  align-items: center;
  justify-content: space-between;
  box-sizing: border-box;
  width: 30px;
  height: 210px;
  padding: 11px 0 17px;
  background: #f1f1f1;
  color: #000;
}
.quick-setup span {
  font-size: 18px;
  writing-mode: vertical-rl;
  text-orientation: sideways;
  transform: rotate(180deg);
}
.navbar {
  position: absolute;
  bottom: 9px;
  left: 50%;
  display: flex;
  align-items: center;
  gap: 14px;
  box-sizing: border-box;
  height: 36px;
  margin-left: -173px;
  padding: 0 10px 0 4px;
  background: #f1f1f1;
}
.navbar::after {
  content: "";
  position: absolute;
  right: 0;
  bottom: 9px;
  width: 1px;
  height: 15px;
  background: #445;
}
.navbar button {
  gap: 7px;
}
.navbar .caret {
  margin-right: -4px;
}
.navbar .tight {
  gap: 3px;
}
.assistant {
  position: absolute;
  right: 10px;
  bottom: 12px;
}

/* timeline */
.timeline {
  display: flex;
  flex: none;
  align-items: flex-start;
  gap: 18px;
  box-sizing: border-box;
  height: 41px;
  padding: 14px 12px 0 17px;
  overflow: hidden;
  border-top: 1px solid #d0d0d0;
  background: #f1f1f1;
  fill: #666;
}
.timeline button {
  height: 44px;
}
.marker {
  margin-left: 2px;
}
.timeline .settings {
  margin-left: auto;
}

/* overlays */
.callout {
  position: absolute;
  top: 0;
  left: 208px;
}
.watermark {
  position: absolute;
  right: 4px;
  bottom: 12px;
  color: rgba(225, 225, 225, 0.85);
  font: 50px/60px "Liberation Sans", Arial, sans-serif;
  text-shadow: 1px 1px 1px #999;
  white-space: nowrap;
}
</style>
